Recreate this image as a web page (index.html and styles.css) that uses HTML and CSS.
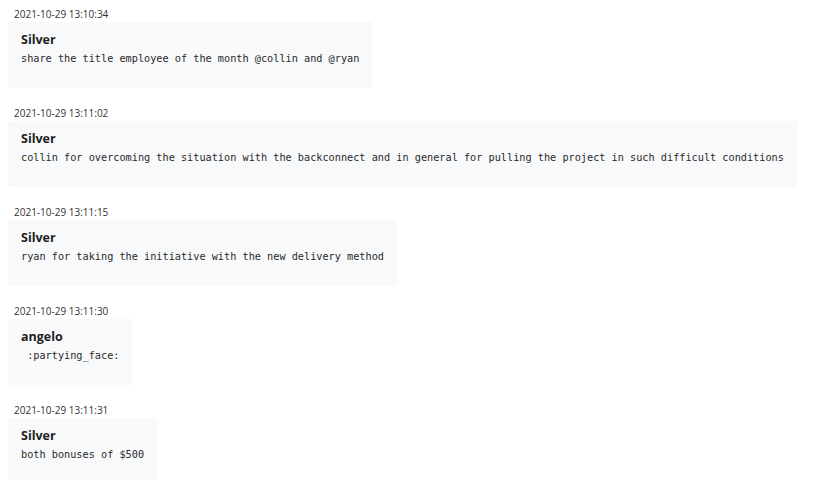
FILE: index.html
```html
<!DOCTYPE html>
<html>
<head>
<meta charset="utf-8">
<link rel="stylesheet" href="styles.css">
</head>
<body>
<div class="feed">
  <div class="item">
    <div class="time">2021-10-29 13:10:34</div>
    <div class="card">
      <div class="name">Silver</div>
      <div class="msg">share the title employee of the month @collin and @ryan</div>
    </div>
  </div>
  <div class="item">
    <div class="time">2021-10-29 13:11:02</div>
    <div class="card">
      <div class="name">Silver</div>
      <div class="msg">collin for overcoming the situation with the backconnect and in general for pulling the project in such difficult conditions</div>
    </div>
  </div>
  <div class="item">
    <div class="time">2021-10-29 13:11:15</div>
    <div class="card">
      <div class="name">Silver</div>
      <div class="msg">ryan for taking the initiative with the new delivery method</div>
    </div>
  </div>
  <div class="item">
    <div class="time">2021-10-29 13:11:30</div>
    <div class="card">
      <div class="name">angelo</div>
      <div class="msg"> :partying_face:</div>
    </div>
  </div>
  <div class="item">
    <div class="time">2021-10-29 13:11:31</div>
    <div class="card">
      <div class="name">Silver</div>
      <div class="msg">both bonuses of $500</div>
    </div>
  </div>
</div>
</body>
</html>
```
FILE: styles.css
```css
html, body {
  margin: 0;
  padding: 0;
  background: #ffffff;
}
body {
  padding: 8px;
  font-family: "Open Sans", "Liberation Sans", sans-serif;
  color: #222;
}
.feed {
  display: flex;
  flex-direction: column;
  align-items: flex-start;
}
.item {
  display: flex;
  flex-direction: column;
  align-items: flex-start;
  margin-bottom: 19px;
}
.time {
  font-size: 10px;
  line-height: 12px;
  margin: 0 0 2px 6px;
  color: #333;
}
.card {
  background: #f8f9fa;
  padding: 9px 13px 21px 13px;
  border-radius: 2px;
}
.name {
  font-weight: 700;
  font-size: 12.5px;
  line-height: 18px;
  color: #1e1e1e;
}
.msg {
  font-family: "DejaVu Sans Mono", "Liberation Mono", monospace;
  font-size: 10.23px;
  line-height: 16px;
  margin-top: 2px;
  white-space: pre;
  color: #2a2a2a;
}
```
